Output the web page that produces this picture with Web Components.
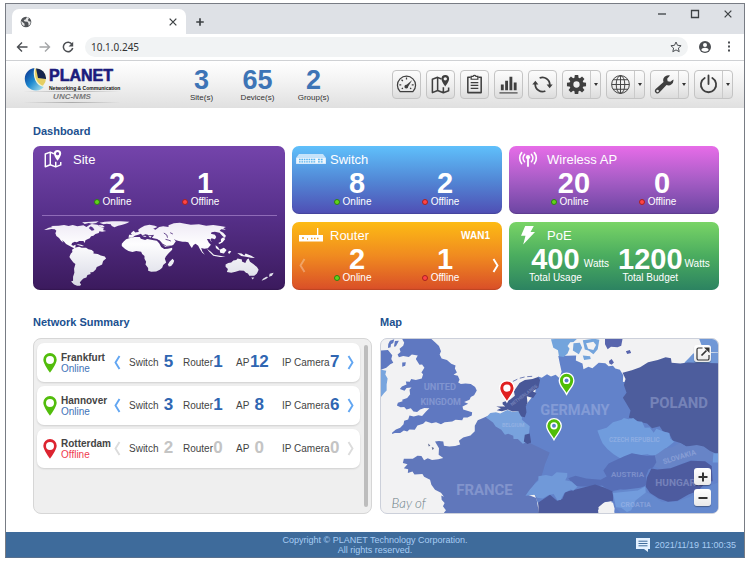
<!DOCTYPE html>
<html lang="en">
<head>
<meta charset="utf-8">
<title>UNC-NMS Dashboard</title>
<style>
body{margin:0;padding:3px 5px 4px;box-sizing:border-box;min-height:100vh;display:flex;flex-direction:column;background:#fff;font-family:"Liberation Sans",Arial,sans-serif;color:#444}
</style>
</head>
<body>
<browser-window address="10.1.0.245">
  <nms-header>
    <stat-count value="3">Site(s)</stat-count>
    <stat-count value="65">Device(s)</stat-count>
    <stat-count value="2">Group(s)</stat-count>
    <tool-button slot="tools" icon="gauge" label="Dashboard"></tool-button>
    <tool-button slot="tools" icon="sitemap" label="Sites"></tool-button>
    <tool-button slot="tools" icon="clipboard" label="Logs"></tool-button>
    <tool-button slot="tools" icon="bars" label="Statistics"></tool-button>
    <tool-button slot="tools" icon="refresh" label="Refresh"></tool-button>
    <tool-button slot="tools" icon="gear" label="Settings" menu></tool-button>
    <tool-button slot="tools" icon="globe" label="Language" menu></tool-button>
    <tool-button slot="tools" icon="wrench" label="Maintenance" menu></tool-button>
    <tool-button slot="tools" icon="power" label="Power" menu></tool-button>
  </nms-header>
  <nms-dashboard>
    <status-card slot="cards" class="site" kind="site" icon="sitemap" heading="Site" online="2" offline="1"><world-map></world-map></status-card>
    <status-card slot="cards" kind="switch" icon="switch" heading="Switch" online="8" offline="2"></status-card>
    <status-card slot="cards" kind="wireless" icon="wireless" heading="Wireless AP" online="20" offline="0"></status-card>
    <status-card slot="cards" kind="router" icon="router" heading="Router" online="2" offline="1" port="WAN1"></status-card>
    <power-card slot="cards"></power-card>
    <site-row slot="rows" name="Frankfurt" status="Online" counts="5,1,12,7"></site-row>
    <site-row slot="rows" name="Hannover" status="Online" counts="3,1,8,6"></site-row>
    <site-row slot="rows" name="Rotterdam" status="Offline" counts="2,0,0,0"></site-row>
    <region-map slot="map"></region-map>
  </nms-dashboard>
  <nms-footer></nms-footer>
</browser-window>

<script>
const ICONS = {
  gauge: ['0 0 22 22', '<g fill="none" stroke="currentColor" stroke-width="1.3"><path d="M4.3 18.5A9.5 9.5 0 1 1 17.7 18.5Z" stroke-linejoin="round"/><path d="M11 3.6v2.2M5.8 6l1.4 1.4M3.5 11.5h2M18.5 11.5h-2M6 15.5l1.3-.7M16 15.5l-1.3-.7"/></g><path d="M17 6.2l-4.2 6.9a2 2 0 1 1-1.7-1.9z" fill="currentColor"/>'],
  sitemap: ['0 0 22 22', '<path d="M12 5.2L8 3.5 2.5 5.5v14L8 17.3l6 2.4 5.5-2.2v-3.3M8 3.5v13.8M14 14v5.7" fill="none" stroke="currentColor" stroke-width="1.6" stroke-linejoin="round"/><path fill-rule="evenodd" d="M16 1a4 4 0 0 1 4 4c0 3-4 8-4 8s-4-5-4-8a4 4 0 0 1 4-4zm0 2.3a1.8 1.8 0 1 0 0 3.600 1.800 1.800 0 0 0 0-3.600z" fill="currentColor"/>'],
  clipboard: ['0 0 22 22', '<path d="M7 3.500H4v16h14v-16h-3" fill="none" stroke="currentColor" stroke-width="1.600" stroke-linejoin="round"/><path d="M7.500 5.500v-3h2a1.600 1.600 0 0 1 3 0h2v3z" fill="none" stroke="currentColor" stroke-width="1.300"/><path d="M7 9h8M7 12h8M7 15h8" stroke="currentColor" stroke-width="1.300"/>'],
  bars: ['0 0 22 22', '<path d="M3 11h3v6H3zM7.500 7h3v10h-3zM12 3h3v14h-3zM16.500 9h3v8h-3z" fill="currentColor"/><path d="M1.500 19.800h19" stroke="currentColor" stroke-width="1.200"/>'],
  refresh: ['0 0 22 22', '<g fill="none" stroke="currentColor" stroke-width="1.900"><path d="M8 4.200A7.600 7.600 0 0 1 18.600 11.500M14 17.800A7.600 7.600 0 0 1 3.400 10.500"/></g><path d="M15.300 11h6.400l-3.200 4zM.300 11h6.400L3.500 7z" fill="currentColor"/>'],
  gear: ['0 0 22 22', '<g fill="currentColor"><path d="M9.200 1h3.600l.5 4H8.700zM9.200 21h3.600l.5-4H8.700zM1 9.200v3.600l4 .5V8.700zM21 9.200v3.600l-4 .5V8.700z"/><path transform="rotate(45 11 11)" d="M9.200 1h3.600l.5 4H8.700zM9.200 21h3.600l.5-4H8.700zM1 9.200v3.600l4 .5V8.700zM21 9.200v3.600l-4 .5V8.700z"/></g><circle cx="11" cy="11" r="5.300" fill="none" stroke="currentColor" stroke-width="4"/>'],
  globe: ['0 0 22 22', '<g fill="none" stroke="currentColor" stroke-width="1"><circle cx="11" cy="11" r="9.300"/><ellipse cx="11" cy="11" rx="4.500" ry="9.300"/><path d="M11 1.700v18.600M1.700 11h18.600M3.200 6h15.600M3.200 16h15.600"/></g>'],
  wrench: ['0 0 22 22', '<path fill-rule="evenodd" fill="currentColor" d="M20.300 5.700a5.300 5.300 0 0 1-7.200 5.800l-7.400 8a2.700 2.700 0 0 1-4-3.700l8.300-7.300A5.300 5.300 0 0 1 16.800 1.600l-3 3.300.5 2.700 2.700.6zM3.700 16.400a1.300 1.300 0 1 0 .1 2.600 1.300 1.300 0 0 0-.1-2.600z"/>'],
  power: ['0 0 22 22', '<path d="M7 4.200a8 8 0 1 0 8 0M11 1.500v9" fill="none" stroke="currentColor" stroke-width="1.900" stroke-linecap="round"/>'],
  wireless: ['0 0 22 22', '<g fill="none" stroke="currentColor" stroke-width="1.800" stroke-linecap="round"><path d="M4 4a9.500 9.500 0 0 0 0 12M18 4a9.500 9.500 0 0 1 0 12M7.200 6a6 6 0 0 0 0 8M14.800 6a6 6 0 0 1 0 8"/></g><circle cx="11" cy="9" r="2.300" fill="currentColor"/><path d="M10 11h2v8.500h-2z" fill="currentColor"/>'],
  bolt: ['0 0 16 20', '<path d="M5.200 1h8.600l-3.300 6H15L3.200 19.500l2.300-8.700H1z" fill="currentColor"/>'],
  switch: ['0 0 30 10', '<path d="M3 0h24l3 4v6H0V4z" fill="#fff" opacity=".65"/><path d="M.5 4h29v5.500H.500z" fill="#fff" opacity=".7"/><path d="M3 5.500h17M3 7.800h17" stroke="#55b3ee" stroke-width="1.300" stroke-dasharray="1.600 .8"/><path d="M22 5.500h5M22 7.800h5" stroke="#55b3ee" stroke-width="1.300" stroke-dasharray="1.800 1"/>'],
  router: ['0 0 24 14', '<path d="M18 0h1.300v7H24v6.500H0V7h18z" fill="#fff"/><path d="M3 10h2M8 11h1M12 10.500h1.500M15 10.500h1.500M18 10.500h1.500" stroke="#f2a024" stroke-width="1.600"/>'],
  next: ['0 0 7 15', '<path d="M1.500 1l4 6.500-4 6.500" fill="none" stroke="currentColor" stroke-width="1.900"/>'],
  prev: ['0 0 7 15', '<path d="M5.500 1l-4 6.500 4 6.500" fill="none" stroke="currentColor" stroke-width="1.900"/>'],
  pin: ['0 0 14 20', '<path fill-rule="evenodd" fill="currentColor" d="M7 0a6.700 6.700 0 0 1 6.700 6.700C13.700 11 7 19.700 7 19.700S.3 11 .3 6.700A6.700 6.700 0 0 1 7 0zm0 3a4 4 0 1 0 0 8 4 4 0 0 0 0-8z"/>'],
  favicon: ['0 0 12 12', '<circle cx="6" cy="6" r="5.300" fill="#505357"/><path d="M1.300 5l3.200 2.700v2.500C2.500 9.500 1.200 8 1.300 5zM7 1l-1.500 2.500L3.700 4l1 1.500 2.800.3 1 1.700v2.300c1.700-1 2.300-2.600 2-4.300l-2-.3-.5-1.500L9 2z" fill="#fff" opacity=".85"/>'],
  close: ['0 0 12 12', '<path d="M2 2l8 8M10 2l-8 8" stroke="currentColor" stroke-width="1.500"/>'],
  plus: ['0 0 12 12', '<path d="M6 1.500v9M1.500 6h9" stroke="currentColor" stroke-width="2"/>'],
  minus: ['0 0 12 12', '<path d="M1.500 6h9" stroke="currentColor" stroke-width="2"/>'],
  min: ['0 0 10 10', '<path d="M1 5h8" stroke="currentColor" stroke-width="1.300"/>'],
  max: ['0 0 10 10', '<path d="M1.500 1.500h7v7h-7z" fill="none" stroke="currentColor" stroke-width="1.300"/>'],
  back: ['0 0 12 12', '<path d="M11.500 6H1.500M6 1.500L1.500 6 6 10.500" fill="none" stroke="currentColor" stroke-width="1.400"/>'],
  forward: ['0 0 12 12', '<path d="M.5 6h10M6 1.500L10.500 6 6 10.500" fill="none" stroke="currentColor" stroke-width="1.400"/>'],
  reload: ['0 0 12 12', '<path d="M10 3.300A4.700 4.700 0 1 0 10.700 7" fill="none" stroke="currentColor" stroke-width="1.500"/><path d="M11.200.800v4.600H6.600z" fill="currentColor"/>'],
  star: ['0 0 12 12', '<path d="M6 1l1.500 3.300 3.600.4-2.700 2.400.8 3.600L6 8.900l-3.200 1.800.8-3.600L.9 4.700l3.600-.4z" fill="none" stroke="currentColor" stroke-width="1"/>'],
  person: ['0 0 12 12', '<circle cx="6" cy="6" r="6" fill="currentColor"/><circle cx="6" cy="4" r="2" fill="#fff"/><path d="M2.300 9c.5-3 6.900-3 7.400 0-1.500 2.300-5.900 2.300-7.400 0z" fill="#fff"/>'],
  dots: ['0 0 4 12', '<path d="M1 1.500h2M1 5.500h2M1 9.500h2" stroke="currentColor" stroke-width="1.800"/>'],
  external: ['0 0 16 16', '<path d="M7.500 2H3.500A1.500 1.500 0 0 0 2 3.500v9A1.500 1.500 0 0 0 3.500 14h9a1.500 1.500 0 0 0 1.500-1.500V9" fill="none" stroke="currentColor" stroke-width="1.200"/><path d="M6.500 9.500l5-5" stroke="currentColor" stroke-width="1.700"/><path d="M9 1.500h5.500V7z" fill="currentColor"/>'],
  message: ['0 0 14 14', '<path d="M0 0h14v11h-2v3l-4-3H0z" fill="#e4f1ff"/><path d="M2.500 3.200h9M2.500 5.500h9M2.500 7.800h9" stroke="#3e6b9b" stroke-width="1"/>']
};

function define(name, render) {
  customElements.define(name, class extends HTMLElement {
    constructor() { super(); this.attachShadow({mode: 'open'}); }
    connectedCallback() { this.shadowRoot.innerHTML = render(this); }
  });
}
const BTN = 'button{font:inherit;color:inherit;border:0;background:none;padding:0;margin:0;display:flex;align-items:center;justify-content:center;cursor:pointer}';

define('ui-icon', el => {
  const [box, body] = ICONS[el.getAttribute('name')];
  return `<style>:host{display:block;flex:none}svg{display:block;width:100%;height:100%}</style><svg viewBox="${box}" aria-hidden="true">${body}</svg>`;
});

define('browser-window', el => `<style>
  :host{flex:1;display:flex;flex-direction:column;border:1px solid #787c84;border-bottom-color:#566f8e}
  ${BTN}
  .tabs{display:flex;height:30px;background:#dee1e6;color:#3c4043;padding:0 11px 0 6px;align-items:flex-end}
  .tab{display:flex;align-items:center;justify-content:space-between;width:174px;height:25px;box-sizing:border-box;padding:0 8px;background:#fff;border-radius:7px 7px 0 0}
  .new{margin:0 auto 7px 9px}
  .win{display:flex;gap:23px;align-self:flex-start;margin-top:5px}
  .bar{display:flex;align-items:center;height:26px;padding:0 13px 0 10px;gap:11px;color:#4b4e52;border-bottom:1px solid #cfd1d4}
  .pill{display:flex;align-items:center;flex:1;height:20px;border-radius:10px;background:#f1f3f4;padding:0 6px;min-width:0}
  input{flex:1;min-width:0;border:0;background:none;padding:0;color:#333;font:10px "Noto Sans",sans-serif;outline:0}
  .i12{width:12px;height:12px}.i10{width:10px;height:10px}
  .nav{display:flex;gap:11px}.dim{opacity:.5}.right{display:flex;align-items:center;gap:16px}.dots{width:4px;height:12px}
</style>
<div class="tabs"><div class="tab"><ui-icon class="i12" name="favicon"></ui-icon><button aria-label="Close tab"><ui-icon class="i10" name="close"></ui-icon></button></div>
<button class="new" aria-label="New tab"><ui-icon class="i10" name="plus"></ui-icon></button>
<div class="win"><button aria-label="Minimize"><ui-icon class="i10" name="min"></ui-icon></button><button aria-label="Maximize"><ui-icon class="i10" name="max"></ui-icon></button><button aria-label="Close window"><ui-icon class="i10" name="close"></ui-icon></button></div></div>
<div class="bar"><div class="nav"><button aria-label="Back"><ui-icon class="i12" name="back"></ui-icon></button><button aria-label="Forward" class="dim"><ui-icon class="i12" name="forward"></ui-icon></button><button aria-label="Reload"><ui-icon class="i12" name="reload"></ui-icon></button></div>
<div class="pill"><input aria-label="Address" value="${el.getAttribute('address')}"><button aria-label="Bookmark"><ui-icon class="i12" name="star"></ui-icon></button></div>
<div class="right"><button aria-label="Profile"><ui-icon class="i12" name="person"></ui-icon></button><button aria-label="Menu"><ui-icon class="dots" name="dots"></ui-icon></button></div></div>
<slot></slot>`);

define('brand-logo', () => `<style>
  :host{display:flex;flex-direction:column;width:96px}
  .top{display:flex;align-items:center;gap:3px}
  svg{width:22px;height:24px;flex:none}
  .name{font:bold 16px/18px "Liberation Sans",sans-serif;color:#1b1b7c;-webkit-text-stroke:.6px #1b1b7c}
  .sub{font:bold 5px/6px "Liberation Sans",sans-serif;color:#111;white-space:nowrap}
  .prod{font:italic bold 8px/10px "Liberation Sans",sans-serif;color:#777;text-align:center;border:1px solid;border-width:1px 0;border-image:linear-gradient(90deg,transparent,#aaa,transparent) 1}
</style><div class="top"><svg viewBox="0 0 22 24"><defs><linearGradient id="b" x1="0" y1="0" x2="1" y2="1"><stop offset="0" stop-color="#0b2b8a"/><stop offset=".5" stop-color="#1d8ad0"/><stop offset="1" stop-color="#b9ecf2"/></linearGradient></defs><circle cx="12" cy="11.500" r="10" fill="#e6cf63"/><path d="M12 1.500A10 10 0 0 1 22 12L14 11z" fill="#16254e"/><path d="M11 1C3 2 0 8 1 14s5 9 11 9.500c4 0 7-2 8-4C12 18 9 11 11 1z" fill="url(#b)"/><path d="M11 1c-2 8 1 17 9 18.500" stroke="#f4f4d8" stroke-width="1.200" fill="none"/></svg>
<div><div class="name">PLANET</div><div class="sub">Networking &amp; Communication</div></div></div><div class="prod">UNC-NMS</div>`);

define('nms-header', () => `<style>
  :host{display:flex;align-items:center;height:47px;padding:0 11px 0 18px;background:linear-gradient(#fff,#f4f4f4 40%,#e0e0e0)}
  .stats{display:flex;margin-left:54px;gap:1px}
  nav{display:flex;gap:5px;margin-left:auto;align-self:flex-start;padding-top:9px}
</style><brand-logo></brand-logo><div class="stats"><slot></slot></div><nav><slot name="tools"></slot></nav>`);

define('stat-count', el => `<style>
  :host{display:flex;flex-direction:column;align-items:center;width:55px}
  b{font-size:27px;line-height:26px;color:#3d74b6}span{font-size:8px;line-height:9px;color:#333}
</style><b>${el.getAttribute('value')}</b><span><slot></slot></span>`);

define('tool-button', el => {
  const menu = el.hasAttribute('menu'), label = el.getAttribute('label');
  return `<style>
  :host{display:flex;box-sizing:border-box;height:29px;border:1px solid #c4c4c4;border-radius:4px;background:linear-gradient(#fcfcfc,#ececec 60%,#dcdcdc);color:#3f3f3f}
  ${BTN}
  .main{width:27px}.more{width:10px;border-left:1px solid #cacaca}
  .more::after{content:"";border:2px solid transparent;border-top:3px solid #333;border-bottom:0}
  ui-icon{width:21px;height:21px}
  </style><button class="main" aria-label="${label}"><ui-icon name="${el.getAttribute('icon')}"></ui-icon></button>${menu ? `<button class="more" aria-label="${label} menu"></button>` : ''}`;
});

define('nms-dashboard', () => `<style>
  :host{flex:1;display:flex;flex-direction:column;padding:15px 25px 18px 27px;background:#fff}
  h2{margin:0;font-size:11px;line-height:16px;color:#20508f}
  .cards{display:grid;grid-template-columns:252fr 210fr 210fr;gap:8px 7px;margin:7px 0 24px}
  ::slotted(.site){grid-row:span 2}
  .lower{flex:1;display:grid;grid-template-columns:1fr 1fr;column-gap:8px}
  section{display:flex;flex-direction:column;gap:8px}
  .list{flex:1;display:flex;gap:4px;box-sizing:border-box;min-height:176px;border:1px solid #d6d6d6;border-radius:8px;background:#efefef;padding:4px 3px}
  .rows{flex:1;display:flex;flex-direction:column;gap:4px}
  .thumb{width:4px;border-radius:2px;background:#bdbdbd;margin:2px 0}
</style><h2>Dashboard</h2><div class="cards"><slot name="cards"></slot></div>
<div class="lower"><section><h2>Network Summary</h2><div class="list"><div class="rows"><slot name="rows"></slot></div><div class="thumb"></div></div></section>
<section><h2>Map</h2><slot name="map"></slot></section></div>`);

const CARD = `:host{display:flex;flex-direction:column;box-sizing:border-box;border-radius:7px;color:#fff;padding:5px 0 3px;min-height:68px}
  header{display:flex;align-items:center;height:16px;margin-bottom:3px;font-size:13px}
  .ico{display:flex;justify-content:center;align-items:center;width:38px;flex:none}
  strong{font-size:29px;line-height:26px;display:block}
  .lab{font-size:10px;line-height:12px;white-space:nowrap}`;
const FILL = {
  site: 'linear-gradient(#7444ab,#58318c 45%,#3b1a5d)', switch: 'linear-gradient(#5fc0fb,#5288d6 50%,#4f4eb4)',
  wireless: 'linear-gradient(#e76ce8,#a75dc6 50%,#6b45a2)', router: 'linear-gradient(#fdbb14,#f08a20 50%,#d94e28)'
};
const SIZE = {site: [20, 20], switch: [30, 10], wireless: [20, 20], router: [24, 14]};

define('status-card', el => {
  const a = n => el.getAttribute(n), k = a('kind'), site = k === 'site', port = a('port');
  return `<style>${CARD}${BTN}
  :host{background:${FILL[k]};box-shadow:inset 0 -1px 1px #0002}
  .ico{width:${site ? 40 : 38}px}
  .ico ui-icon{width:${SIZE[k][0]}px;height:${SIZE[k][1]}px}
  .port{margin-left:auto;padding-right:12px;font-size:10px;font-weight:bold}
  .body{display:flex;align-items:center}
  .lead{width:${site ? 40 : 21}px;flex:none;display:flex;justify-content:center}.trail{flex:1;display:flex;justify-content:center}
  .cell{width:88px;text-align:center}
  .lab::before{content:"";display:inline-block;box-sizing:border-box;width:6px;height:6px;border-radius:50%;background:#62d41a;border:1px solid #2e8014;margin:0 3px 0 -9px;vertical-align:middle}
  .off .lab::before{background:#ff4545;border-color:#a82020}
  .body ui-icon{width:7px;height:15px}.prev{opacity:.3}
  </style><header><span class="ico"><ui-icon name="${a('icon')}"></ui-icon></span>${a('heading')}${port ? `<span class="port">${port}</span>` : ''}</header>
  <div class="body"><div class="lead">${port ? '<button class="prev" aria-label="Previous port"><ui-icon name="prev"></ui-icon></button>' : ''}</div>
  <div class="cell"><strong>${a('online')}</strong><div class="lab">Online</div></div><div class="cell off"><strong>${a('offline')}</strong><div class="lab">Offline</div></div>
  <div class="trail">${port ? '<button aria-label="Next port"><ui-icon name="next"></ui-icon></button>' : ''}</div></div><slot></slot>`;
});

define('power-card', () => `<style>${CARD}
  :host{background:linear-gradient(#79d466,#4aac5f 50%,#2c8361)}
  .ico ui-icon{width:16px;height:20px}
  .body{display:flex;padding-left:20px;gap:9px}
  .cell{display:grid;grid-template-columns:auto auto;column-gap:2px;justify-items:center}
  .unit{font-size:10px;align-self:center;padding-top:9px}
</style><header><span class="ico"><ui-icon name="bolt"></ui-icon></span>PoE</header>
<div class="body"><div class="cell"><strong>400</strong><span class="unit">Watts</span><div class="lab">Total Usage</div></div>
<div class="cell"><strong>1200</strong><span class="unit">Watts</span><div class="lab">Total Budget</div></div></div>`);

define('world-map', () => `<style>
  :host{display:block;margin:7px 8px 0 9px;border-top:1px solid #8f6bb8;padding-top:4px}svg{display:block;width:100%}
</style><svg viewBox="70 316 704 200" role="img" aria-label="World map"><defs><linearGradient id="g" gradientUnits="userSpaceOnUse" x1="0" y1="320" x2="0" y2="515"><stop offset="0" stop-color="#eee9f5"/><stop offset=".35" stop-color="#fdfdfe"/><stop offset="1" stop-color="#d7d8e4"/></linearGradient></defs><g fill="url(#g)">
<path d="M76 346L90 339 102 337 96 334 120 333 136 331 150 334 162 331 176 335 194 332 203 337 212 331 219 328 236 330 246 337 256 342 252 346 262 349 250 351 242 350 240 355 230 358 224 363 217 365 213 371 206 374 200 377 198 385 194 379 182 379 174 383 168 381 160 385 158 391 164 393 170 390 171 395 168 398 176 403 184 402 179 406 170 402 160 398 153 394 142 388 137 382 130 376 134 384 127 378 121 370 113 364 110 356 113 348 108 344 98 343 86 345z"/>
<path d="M242 324L258 321 280 320 306 320 332 321 326 325 318 328 308 331 298 333 287 338 279 334 276 329 264 327 254 329zM190 323L216 321 240 320 232 325 220 327 210 325 198 328zM238 331L252 332 258 337 249 339zM173 388L187 390 196 394 190 395 178 391z"/>
<path d="M160 405L168 399 181 396 189 399 202 399 209 404 219 406 225 411 224 416 237 418 246 422 258 425 262 431 253 439 250 449 241 454 234 457 231 464 223 472 214 473 216 478 206 481 203 488 194 491 188 497 183 503 187 509 184 513 175 513 166 509 157 500 163 498 163 486 167 474 166 462 170 448 164 443 157 434 152 427 156 417 161 412z"/>
<path d="M322 374L331 371 347 367 363 367 366 372 379 376 385 373 405 377 414 378 421 386 427 397 436 403 447 402 460 399 460 405 450 415 441 425 438 432 442 443 433 451 430 459 423 465 412 470 397 471 388 468 388 460 380 449 382 441 377 432 377 424 370 418 367 411 352 409 341 412 329 409 319 403 309 394 309 387 314 381z"/>
<path d="M461 432L466 438 463 446 457 454 450 455 447 449 452 441zM336 356L344 348 351 354 348 359 340 361z"/>
<path d="M329 369L331 360 342 360 352 353 360 352 358 345 365 340 377 333 392 330 408 333 416 337 403 342 410 345 421 337 433 335 449 337 449 332 465 326 483 324 499 327 516 330 540 329 562 333 583 331 604 334 621 337 613 341 621 345 607 344 602 348 613 354 621 363 618 370 610 363 602 354 588 351 578 353 576 357 588 360 592 367 588 374 578 371 574 376 580 383 574 378 572 373 564 373 570 384 576 390 567 401 556 402 547 400 550 410 558 420 550 414 544 405 538 393 530 387 524 391 519 400 515 395 508 383 500 381 491 381 480 379 472 377 465 373 471 380 463 391 445 397 439 397 430 387 423 378 415 373 404 371 399 369 404 364 400 362 395 369 391 367 387 360 376 358 383 366 375 366 366 357 358 360 348 363 340 369z"/>
<path d="M606 373L613 368 619 373 611 383 602 388 598 385 606 381zM590 392L597 397 603 406 598 405 591 400zM564 402L576 411 585 420 603 423 620 427 603 427 583 423 571 411zM602 405L615 399 623 406 615 416 604 414zM630 408L637 410 632 417 627 415zM655 415L668 416 676 422 680 416 697 423 708 430 696 429 681 426 667 424z"/>
<path d="M620 449L628 445 637 443 643 437 652 436 656 431 669 434 669 440 679 445 684 434 689 431 693 441 703 448 714 457 719 465 714 476 706 483 691 483 687 476 681 474 675 468 662 467 650 471 637 474 624 472 627 463 620 456zM697 488L706 488 701 494zM752 477L764 474 759 483 750 486zM748 487L741 493 728 498 732 492 742 486z"/></g>
<g fill="none" stroke="#4d2a7a" stroke-width="2.500"><path d="M421 378l10 10 12 7 13-1M440 374l8 2 8 3M372 362l18 1 15-1M435 355l9 6 2 8M454 354l8 4"/></g><path d="M210 340l9 8 8-2-4-7-7-4z" fill="#58318c"/></svg>`);

define('site-row', el => {
  const on = el.getAttribute('status') === 'Online', n = el.getAttribute('counts').split(',');
  const items = ['Switch', 'Router', 'AP', 'IP Camera'].map((t, i) => `<div class="item">${t}<b class="${i % 2 ? 'slim' : ''}">${n[i]}</b></div>`).join('');
  return `<style>
  :host{display:flex;align-items:center;box-sizing:border-box;height:39px;padding:0 6px;border-radius:7px;background:#fff;box-shadow:0 1px 2px #0002;font-size:10px;color:#444}
  ${BTN}
  .pin{width:14px;height:20px;color:${on ? '#52bd0c' : '#dc2430'};margin-right:4px}
  .who{width:53px;line-height:11px;color:${on ? '#4173b8' : '#ef3b50'}}.who strong{display:block;color:#444}
  button{color:${on ? '#62a6f2' : '#dcdcdc'}}button ui-icon{width:7px;height:15px}
  .items{flex:1;display:grid;grid-template-columns:54fr 53fr 46fr 58fr;margin:0 7px 0 8px}
  .item{display:flex;align-items:center;white-space:nowrap}
  b{font-size:17px;line-height:17px;width:20px;text-align:center;padding-bottom:3px;color:${on ? '#2f66b2' : '#c4c4c4'}}
  .slim{width:10px}
  </style><ui-icon class="pin" name="pin"></ui-icon><div class="who"><strong>${el.getAttribute('name')}</strong>${el.getAttribute('status')}</div>
  <button aria-label="Previous"><ui-icon name="prev"></ui-icon></button><div class="items">${items}</div><button aria-label="Next"><ui-icon name="next"></ui-icon></button>`;
});

const mapPin = (x, y, c) => `<g transform="translate(${x} ${y})"><path d="M0 0C-8-16-22-26-22-42A22 22 0 0 1 22-42C22-26 8-16 0 0z" fill="${c}" stroke="#fff" stroke-width="4"/><circle cy="-42" r="11" fill="#fff"/>${c === '#e02020' ? '' : '<circle cy="-42" r="6" fill="#5b7fca"/>'}</g>`;
define('region-map', () => `<style>
  :host{flex:1;display:block;position:relative;box-sizing:border-box;min-height:176px;border-radius:7px;overflow:hidden;border:1px solid #ccd0da;background:#f2f2f3}
  ${BTN}
  svg{position:absolute;width:100%;height:100%}
  .ctl{position:absolute;right:7px;display:flex;flex-direction:column;gap:4px}
  .zoom{bottom:7px}.open{top:6px}
  button{width:17px;height:17px;border-radius:3px;background:linear-gradient(#fff,#e9e9e9);color:#333;box-shadow:0 1px 1px #0005}
  ui-icon{width:12px;height:12px}.open ui-icon{width:16px;height:16px}
  text{font-family:Roboto,"Liberation Sans",sans-serif;font-weight:bold;fill:#c3cdee;opacity:.34}
  .bay{font:italic 300 40px Lato,sans-serif;fill:#6c8087;opacity:1}
</style><svg viewBox="15 85 1017 529" preserveAspectRatio="xMidYMid slice" role="img" aria-label="Map of sites">
<path d="M400 330L440 318 500 240 760 215 1032 200V614H720L710 575 600 600H495L480 560 400 420z" fill="#6282ca"/>
<g fill="#5f78c1"><path d="M78 85L165 85 178 97 190 108 196 124 192 134 198 146 214 150 227 162 240 167 238 176 244 188 234 195 247 198 252 210 248 218 256 223 270 221 286 223 299 232 304 242 296 257 286 262 282 270 266 277 278 282 261 291 263 300 290 308 289 318 276 324 264 324 260 332 240 331 230 336 207 338 196 344 181 338 168 341 150 335 142 343 125 348 117 361 101 360 94 366 84 363 73 371 57 371 48 374 49 369 60 360 73 355 83 344 85 334 97 330 101 318 114 321 128 317 139 319 151 306 161 296 146 295 133 300 124 307 113 306 105 296 92 300 85 292 74 293 63 288 66 279 80 275 79 270 94 265 103 254 101 240 107 233 92 235 86 243 72 238 78 230 92 224 90 215 102 216 106 208 120 211 138 206 142 193 137 188 146 174 139 164 131 165 120 147 126 137 108 134 99 141 82 138 69 142 65 134 74 126 71 116 82 107 85 98z"/><path d="M15 122L36 120 49 136 46 147 52 159 43 163 31 174 15 180zM42 92L55 88 52 99 45 103 44 112 36 114 37 102zM57 93L69 92 60 109 54 110zM79 158L90 157 88 168 79 171z"/></g>
<path d="M15 180L31 183 28 194 35 206 32 224 32 242 24 251 15 262z" fill="#78a5de"/>
<path d="M190 395L203 396 205 409 221 411 239 410 254 405 250 394 263 384 285 378 298 365 298 349 307 332 323 325 340 318 430 380 525 428 510 465 500 500 480 520 460 558 484 567 492 614 203 614 211 604 202 592 207 582 198 572 197 559 205 563 196 551 178 542 167 527 163 512 145 503 140 494 116 496 110 487 96 491 97 480 84 477 95 465 81 461 84 448 111 448 125 439 137 440 145 453 156 447 169 452 188 450 203 446 189 436 190 417 178 396z" fill="#6077bb"/>
<path d="M489 200L500 204 516 193 528 200 542 195 553 205 560 186 555 163 550 138 604 137 603 152 623 161 626 178 641 171 653 175 672 159 692 160 702 169 715 168 722 176 736 180 746 196 745 215 755 245 746 262 757 280 768 301 763 328 900 560 590 545 500 500 516 465 525 430 467 402 465 380 440 305 457 280 480 250z" fill="#6282ca"/>
<path d="M332 324L345 310 362 308 375 312 396 301 414 307 429 304 441 318 440 331 450 339 464 350 461 375 451 379 452 399 443 403 428 389 415 389 414 379 399 373 389 376 378 361 361 351 353 339z" fill="#78a2dd"/>
<path d="M382 278L404 270 419 258 416 245 433 220 449 211 472 208 489 202 495 211 490 234 473 245 484 251 474 265 455 260 457 279 452 291 454 308 449 323 438 321 429 304 413 306 398 300 380 305 364 302 377 296 363 291 390 291 382 284zM449 376l15-4 4 27-11 5-11-8z" fill="#485798"/>
<path d="M413 215l18-9 20-5 28-2" stroke="#7380b5" stroke-width="3" stroke-dasharray="15 8" fill="none"/>
<path d="M528 88L552 86 607 86 596 96 586 97 578 108 584 116 578 131 566 141 552 139 549 121 535 113zM596 100L615 98 622 113 612 133 594 122zM624 91L658 86 674 89 669 118 656 133 641 122 630 119zM624 137L646 139 648 147 628 150z" fill="#73a4dc"/>
<path d="M634 100l22-5 8 10-8 15-16-4z" fill="#f2f2f3"/>
<path d="M691 86H744L740 107 729 112 709 110 699 118 691 103zM754 124L766 120 770 129 758 132zM703 153L711 147 718 158 711 165 704 161z" fill="#5865ad"/>
<path d="M931 158L946 143 957 131 1032 128V168H938zM975 86H1032V126H990z" fill="#7097d6"/>
<path d="M744 189L772 181 797 172 821 157 850 150 874 142 890 145 892 159 918 161 941 158 1032 160V438L1001 425 969 413 937 411 918 401 895 393 884 371 866 366 856 350 833 356 818 342 792 337 763 324 768 303 755 281 745 264 756 249 748 226 753 208z" fill="#4d5d9d"/>
<path d="M668 363L696 355 715 338 741 331 748 325 762 329 776 325 789 335 803 337 811 355 826 354 838 370 846 358 870 367 885 371 888 388 900 397 885 409 871 420 846 444 819 435 794 438 772 433 741 450 717 435 698 419 684 402 677 387z" fill="#709cdd"/>
<path d="M838 440L852 432 873 417 894 414 917 400 936 411 968 407 989 411 1008 425 1022 431V454L989 458 949 452 916 466 892 476 857 480 835 467z" fill="#6784c7"/>
<path d="M1018 432H1032V460H1016z" fill="#709cdd"/>
<path d="M580 507L602 500 634 508 678 512 696 502 686 484 702 463 726 451 749 441 772 432 817 440 841 438 846 459 836 475 823 480 814 502 819 522 804 539 770 544 738 540 708 547 682 529 652 532 619 532 600 530z" fill="#566eb7"/>
<path d="M490 580L525 557 547 576 562 570 571 549 606 540 661 526 690 536 716 548 715 576 690 579 671 595 675 614H490z" fill="#4c5a9d"/>
<path d="M451 560L463 543 478 525 490 514 490 501 512 497 531 501 545 489 577 491 577 502 571 513 590 517 608 533 595 545 588 541 568 552 557 573 547 573 536 555 521 558 503 568 486 566 479 557z" fill="#7099d9"/>
<path d="M713 548L755 541 797 536 814 530 817 550 831 557 862 578 906 578 950 562 982 537 1032 520V614H740L723 597z" fill="#6589ce"/><path d="M715 552L790 544 812 532 814 550 783 574 770 604 757 609 740 596 724 595z" fill="#729cdd"/>
<path d="M831 478L849 481 889 477 921 465 950 454 993 456 1013 470 1016 516 998 517 972 545 943 556 910 575 881 578 853 568 827 552 814 533 818 504z" fill="#4d5b9f"/>
<path d="M670 603L685 587 715 580 720 599 718 614H671z" fill="#f2f2f3"/>
<path d="M157 402l7 6-5 3zM168 413l7 3-4 7z" fill="#5c678e"/>
<text x="144" y="240" font-size="28">UNITED</text><text x="134" y="286" font-size="27">KINGDOM</text><text x="242" y="558" font-size="45">FRANCE</text><text x="496" y="316" font-size="44">GERMANY</text><text x="826" y="294" font-size="45">POLAND</text><text x="703" y="398" font-size="19">CZECH REPUBLIC</text><text x="709" y="502" font-size="24">AUSTRIA</text><text x="843" y="531" font-size="30">HUNGARY</text><text transform="rotate(-17 868 465)" x="868" y="465" font-size="22">SLOVAKIA</text><text x="738" y="594" font-size="22">CROATIA</text><text x="380" y="354" font-size="16">BELGIUM</text><text transform="rotate(-37 410 290)" x="410" y="290" font-size="14">NETHERLANDS</text><text class="bay" x="47" y="598">Bay of</text>
${mapPin(395, 277, '#e02020')}${mapPin(575, 254, '#50bd07')}${mapPin(537, 391, '#50bd07')}</svg>
<div class="ctl open"><button aria-label="Open map"><ui-icon name="external"></ui-icon></button></div><div class="ctl zoom"><button aria-label="Zoom in"><ui-icon name="plus"></ui-icon></button><button aria-label="Zoom out"><ui-icon name="minus"></ui-icon></button></div>`);

define('nms-footer', () => `<style>
  :host{display:grid;grid-template-columns:1fr auto 1fr;align-items:center;height:25px;padding:0 8px;background:#3e6b9b;color:#a8cdf4;font:9px/10px "Liberation Sans",Arial,sans-serif}
  p{margin:0;text-align:center;grid-column:2}
  .time{display:flex;justify-content:flex-end;align-items:center;gap:5px;white-space:nowrap}
  ui-icon{width:14px;height:14px}
</style><p>Copyright © PLANET Technology Corporation.<br>All rights reserved.</p><div class="time"><ui-icon name="message"></ui-icon><time>2021/11/19 11:00:35</time></div>`);
</script>
</body>
</html>
